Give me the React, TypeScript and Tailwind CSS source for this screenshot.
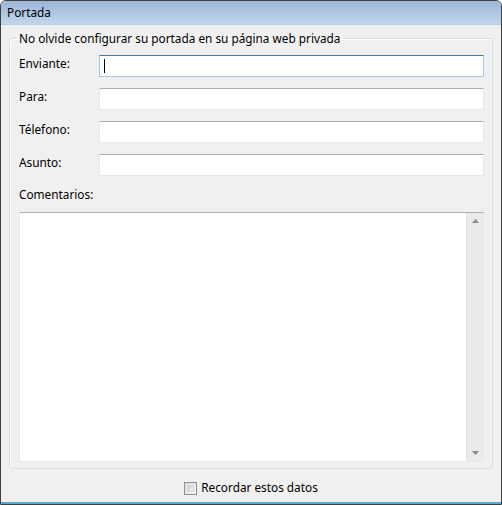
import React from "react";

const font = { fontFamily: '"Noto Sans", "Open Sans", sans-serif' };

function Field({ label, focused }: { label: string; focused?: boolean }) {
  return (
    <div className="flex items-center h-[22px]">
      <div className="w-[89px] shrink-0 pl-[9px] pb-[4px]">{label}</div>
      <div
        className={
          "flex-1 h-[22px] bg-white border flex items-center " +
          (focused
            ? "border-[#a4c9e3] border-t-[#3d7bad]"
            : "border-[#e3e9ef] border-t-[#abadb3]")
        }
      >
        {focused && <div className="ml-[4px] w-px h-[14px] bg-black" />}
      </div>
    </div>
  );
}

export default function App() {
  return (
    <div
      className="w-[502px] h-[505px] flex flex-col bg-[#f0f0f0] text-[11.8px] text-black border border-[#404040] rounded-t-[6px] overflow-hidden"
      style={font}
    >
      {/* Title bar */}
      <div className="h-[24px] shrink-0 flex items-center px-[6px] bg-gradient-to-b from-[#9cb6d6] to-[#c2d6ec] border-b border-[#b9cde3]">
        Portada
      </div>

      <div className="flex-1 flex flex-col px-[8px] pt-[5px] border-b-2 border-[#3fb6d8]">
        {/* Group box */}
        <fieldset className="border border-[#d5dfe5] rounded-[3px] shadow-[inset_1px_1px_0_#ffffff]">
          <legend className="ml-[6px] px-[3px] leading-[16px]">
            No olvide configurar su portada en su página web privada
          </legend>
          <div className="h-[422px] flex flex-col pt-[9px] pr-[8px] pb-[6px]">
            <div className="flex flex-col gap-[11px]">
              <Field label="Enviante:" focused />
              <Field label="Para:" />
              <Field label="Télefono:" />
              <Field label="Asunto:" />
            </div>
            <div className="pl-[9px] mt-[10px] leading-[16px]">Comentarios:</div>
            <div className="ml-[9px] mt-[10px] flex-1 bg-white border border-[#e3e9ef] border-t-[#abadb3] flex justify-end">
              <div className="w-[17px] bg-[#ebebeb] border-l border-[#e2e2e2] flex flex-col justify-between items-center py-[6px]">
                <svg width="7" height="4" viewBox="0 0 7 4">
                  <path d="M3.5 0 L7 4 L0 4 Z" fill="#8a8a8a" />
                </svg>
                <svg width="7" height="4" viewBox="0 0 7 4">
                  <path d="M0 0 L7 0 L3.5 4 Z" fill="#8a8a8a" />
                </svg>
              </div>
            </div>
          </div>
        </fieldset>

        {/* Footer */}
        <div className="flex-1 flex items-center justify-center gap-[4px] pt-[5px]">
          <div className="w-[13px] h-[13px] border border-[#8e8f8f] bg-gradient-to-br from-[#dcdcdc] to-[#f7f7f7] p-[2px]">
            <div className="w-full h-full bg-gradient-to-br from-[#cfcfcf] to-[#f4f4f4] border border-[#d8d8d8]" />
          </div>
          <span>Recordar estos datos</span>
        </div>
      </div>
    </div>
  );
}
